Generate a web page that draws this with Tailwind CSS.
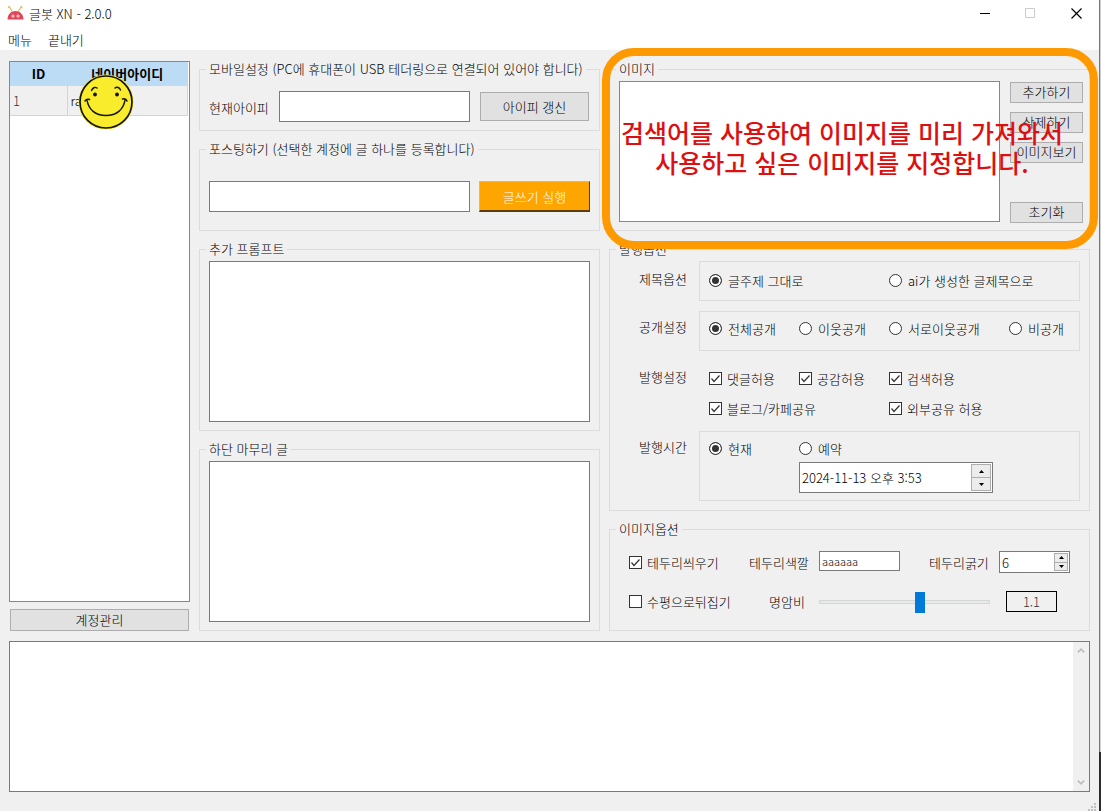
<!DOCTYPE html>
<html lang="ko">
<head>
<meta charset="utf-8">
<meta name="viewport" content="width=device-width, initial-scale=1">
<title>글봇 XN - 2.0.0</title>
<script src="https://cdn.jsdelivr.net/npm/@tailwindcss/browser@4"></script>
</head>
<body class="flex min-h-screen bg-[#f0f0f0] font-['Noto_Sans_CJK_KR',sans-serif] text-[13px] leading-[19px] font-light text-black">
<div class="flex min-w-0 flex-1 flex-col">

  <!-- Title bar and menu -->
  <header class="bg-white">
    <div class="flex h-[26px] items-center pl-[7px]">
      <svg class="mr-[5px] h-4 w-[17px]" viewBox="0 0 17 16" aria-hidden="true">
        <path d="M2.500 2 5.500 7M14 2 11 7" stroke="#e8b64c" stroke-width="1.200" fill="none"/>
        <circle cx="2" cy="2" r="1" fill="#e8b64c"/><circle cx="14.500" cy="2" r="1" fill="#e8b64c"/>
        <path d="M.5 14.500C.5 9.500 4 6 8.500 6s8 3.500 8 8.500z" fill="#e0455a"/>
        <circle cx="6" cy="11" r="1.500" fill="#fff"/><circle cx="11" cy="11" r="1.500" fill="#fff"/>
        <circle cx="6" cy="11" r=".7" fill="#a33"/><circle cx="11" cy="11" r=".7" fill="#a33"/>
      </svg>
      <h1 class="flex-1">글봇 XN - 2.0.0</h1>
      <button class="flex h-[26px] w-[46px] items-center justify-center" aria-label="최소화"><svg width="11" height="11" viewBox="0 0 11 11"><path d="M0 5.500H10" stroke="#000"/></svg></button>
      <button class="flex h-[26px] w-[45px] items-center justify-center" aria-label="최대화" disabled><svg width="11" height="11" viewBox="0 0 11 11"><path d="M.5.500h9v9h-9z" fill="none" stroke="#ccc"/></svg></button>
      <button class="flex h-[26px] w-[46px] items-center justify-center" aria-label="닫기"><svg width="11" height="11" viewBox="0 0 11 11"><path d="M.5.500l10 10M10.500.500l-10 10" stroke="#000" stroke-width="1.200"/></svg></button>
    </div>
    <nav class="flex h-6 items-center gap-4 pt-[2px] pl-2">
      <button>메뉴</button>
      <button>끝내기</button>
    </nav>
  </header>

  <main class="flex flex-1 flex-col gap-[10px] pt-[10px] pr-[9px] pl-[9px]">
    <div class="grid grid-cols-[181fr_401fr_481fr] gap-[9px]">

      <!-- Accounts -->
      <section class="flex flex-col gap-[7px] pt-px">
        <div class="relative flex-1 border border-[#828790] bg-white pr-px">
          <table class="w-full table-fixed border-collapse">
            <thead>
              <tr class="h-6 bg-[#bbdcf4]">
                <th class="w-[57px] p-0 pb-[2px] font-bold">ID</th>
                <th class="p-0 pb-[2px] font-bold">네이버아이디</th>
              </tr>
            </thead>
            <tbody>
              <tr class="h-[29px] bg-[#f0f0f0]">
                <td class="border-r border-b border-[#d4d4d4] p-0 pl-[3px] text-[#333]">1</td>
                <td class="border-r border-b border-[#d4d4d4] p-0 pl-[3px]">ra</td>
              </tr>
            </tbody>
          </table>
          <svg class="absolute top-[12px] left-[68px] h-14 w-14" viewBox="0 0 56 56" aria-hidden="true">
            <circle cx="28" cy="28" r="27.500" fill="#f7e92e"/>
            <circle cx="28" cy="28" r="26" fill="#f9ec2c" stroke="#14140a" stroke-width="1.700"/>
            <path d="M9 26c1.500 9.500 8.500 15.500 19 15.500S45.500 35.500 47 26M7 27c1-1.500 3-2 4.500-1.500M44.500 25c2-.5 4 .5 4.500 2" fill="none" stroke="#14140a" stroke-width="1.500" stroke-linecap="round"/>
            <path d="M13.500 16.500c1-2.500 3.500-4 5.500-2.500M37 14c2-1.500 4.500-.5 5.500 2" fill="none" stroke="#14140a" stroke-width="1.400" stroke-linecap="round"/>
            <circle cx="17" cy="20.500" r="1.900" fill="#14140a"/><circle cx="39" cy="20.500" r="1.900" fill="#14140a"/>
          </svg>
        </div>
        <button class="mx-px h-[22px] border border-[#adadad] bg-[#e1e1e1] pb-[2px]">계정관리</button>
      </section>

      <!-- Posting -->
      <section class="flex min-w-0 flex-col gap-[9px]">
        <fieldset class="border border-[#dcdcdc] px-[9px] pt-3 pb-2">
          <legend class="-ml-[3px] px-[3px] pb-[2px] leading-[17px]">모바일설정 (PC에 휴대폰이 USB 테더링으로 연결되어 있어야 합니다)</legend>
          <div class="flex items-center">
            <label for="ip" class="w-[70px] pt-px">현재아이피</label>
            <input id="ip" type="text" class="h-[31px] min-w-0 flex-1 border border-[#7a7a7a] bg-white px-1">
            <button class="mr-px ml-[10px] h-[29px] w-[109px] border border-[#adadad] bg-[#e1e1e1] pb-px">아이피 갱신</button>
          </div>
        </fieldset>
        <fieldset class="border border-[#dcdcdc] px-[9px] pt-[22px] pb-[18px]">
          <legend class="-ml-[3px] px-[3px] pb-[2px] leading-[17px]">포스팅하기 (선택한 계정에 글 하나를 등록합니다)</legend>
          <div class="flex items-center gap-[9px]">
            <input type="text" aria-label="글 주제" class="h-[31px] min-w-0 flex-1 border border-[#7a7a7a] bg-white px-1">
            <button class="h-[31px] w-[111px] border border-b-2 border-t-[#ffb52e] border-r-[#5c3c00] border-b-[#5c3c00] border-l-[#ffb52e] bg-[#ffa500] text-white">글쓰기 실행</button>
          </div>
        </fieldset>
        <fieldset class="border border-[#dcdcdc] px-[9px] pt-[2px] pb-2">
          <legend class="-ml-[3px] px-[3px] pb-[2px] leading-[17px]">추가 프롬프트</legend>
          <textarea aria-label="추가 프롬프트" class="block h-[161px] w-full resize-none border border-[#7a7a7a] bg-white p-1"></textarea>
        </fieldset>
        <fieldset class="border border-[#dcdcdc] px-[9px] pt-[2px] pb-2">
          <legend class="-ml-[3px] px-[3px] pb-[2px] leading-[17px]">하단 마무리 글</legend>
          <textarea aria-label="하단 마무리 글" class="block h-[161px] w-full resize-none border border-[#7a7a7a] bg-white p-1"></textarea>
        </fieldset>
      </section>

      <!-- Images and publishing -->
      <section class="flex min-w-0 flex-col gap-[9px]">
        <div class="relative">
          <fieldset class="border border-[#dcdcdc] pt-[2px] pr-[6px] pb-[7px] pl-[9px]">
            <legend class="-ml-[3px] px-[3px] pb-[2px] leading-[17px]">이미지</legend>
            <div class="flex gap-[10px]">
              <div role="listbox" aria-label="이미지" class="h-[141px] flex-1 border border-[#828790] bg-white"></div>
              <div class="flex w-[73px] flex-col gap-[9px] pt-px">
                <button class="h-[21px] border border-[#adadad] bg-[#e1e1e1] pb-px leading-[18px]">추가하기</button>
                <button class="h-[21px] border border-[#adadad] bg-[#e1e1e1] pb-px leading-[18px]">삭제하기</button>
                <button class="h-[21px] border border-[#adadad] bg-[#e1e1e1] pb-px leading-[18px]">이미지보기</button>
                <button class="mt-[30px] h-[21px] border border-[#adadad] bg-[#e1e1e1] pb-px leading-[18px]">초기화</button>
              </div>
            </div>
          </fieldset>
          <!-- Highlighted hint -->
          <div class="pointer-events-none absolute -top-3 -right-2 -bottom-[18px] -left-[7px] z-10 rounded-[32px] border-8 border-[#ff9900] pt-[61px] pr-4 text-center text-[25px] leading-[30px] font-medium whitespace-nowrap text-[#dc1010]">
            <p>검색어를 사용하여 이미지를 미리 가져와서<br>사용하고 싶은 이미지를 지정합니다.</p>
          </div>
        </div>

        <fieldset class="border border-[#dcdcdc] pt-[2px] pr-[9px] pb-[9px]">
          <legend class="ml-[6px] px-[3px] pb-[2px] leading-[17px]">발행옵션</legend>
          <div class="grid grid-cols-[89px_1fr] gap-y-[10px]">
            <span class="pt-2 pl-[29px]">제목옵션</span>
            <div role="radiogroup" aria-label="제목옵션" class="grid h-10 grid-cols-[180px_1fr] items-center border border-[#dcdcdc] pb-[2px] pl-[9px]">
              <label class="flex items-center gap-[6px]"><input type="radio" name="title" checked class="size-[13px] appearance-none rounded-full border border-[#333] bg-white checked:bg-[#333] checked:shadow-[inset_0_0_0_2px_#fff]">글주제 그대로</label>
              <label class="flex items-center gap-[6px]"><input type="radio" name="title" class="size-[13px] appearance-none rounded-full border border-[#333] bg-white checked:bg-[#333] checked:shadow-[inset_0_0_0_2px_#fff]">ai가 생성한 글제목으로</label>
            </div>
            <span class="pt-[6px] pl-[29px]">공개설정</span>
            <div role="radiogroup" aria-label="공개설정" class="grid h-10 grid-cols-[90px_90px_120px_1fr] items-center border border-[#dcdcdc] pb-[6px] pl-[9px] whitespace-nowrap">
              <label class="flex items-center gap-[6px]"><input type="radio" name="open" checked class="size-[13px] appearance-none rounded-full border border-[#333] bg-white checked:bg-[#333] checked:shadow-[inset_0_0_0_2px_#fff]">전체공개</label>
              <label class="flex items-center gap-[6px]"><input type="radio" name="open" class="size-[13px] appearance-none rounded-full border border-[#333] bg-white checked:bg-[#333] checked:shadow-[inset_0_0_0_2px_#fff]">이웃공개</label>
              <label class="flex items-center gap-[6px]"><input type="radio" name="open" class="size-[13px] appearance-none rounded-full border border-[#333] bg-white checked:bg-[#333] checked:shadow-[inset_0_0_0_2px_#fff]">서로이웃공개</label>
              <label class="flex items-center gap-[6px]"><input type="radio" name="open" class="size-[13px] appearance-none rounded-full border border-[#333] bg-white checked:bg-[#333] checked:shadow-[inset_0_0_0_2px_#fff]">비공개</label>
            </div>
            <span class="pt-[6px] pl-[29px]">발행설정</span>
            <div class="grid grid-cols-[90px_90px_1fr] gap-y-[11px] pt-2 pb-[3px] pl-[10px] whitespace-nowrap">
              <label class="flex items-center gap-[5px]"><span class="grid"><input type="checkbox" checked class="peer col-start-1 row-start-1 size-[13px] appearance-none border border-[#333] bg-white"><svg class="pointer-events-none invisible col-start-1 row-start-1 size-[13px] peer-checked:visible" viewBox="0 0 13 13"><path d="M2.500 6.500 5 9.500 10.500 3.500" fill="none" stroke="#333" stroke-width="1.200"/></svg></span>댓글허용</label>
              <label class="flex items-center gap-[5px]"><span class="grid"><input type="checkbox" checked class="peer col-start-1 row-start-1 size-[13px] appearance-none border border-[#333] bg-white"><svg class="pointer-events-none invisible col-start-1 row-start-1 size-[13px] peer-checked:visible" viewBox="0 0 13 13"><path d="M2.500 6.500 5 9.500 10.500 3.500" fill="none" stroke="#333" stroke-width="1.200"/></svg></span>공감허용</label>
              <label class="flex items-center gap-[5px]"><span class="grid"><input type="checkbox" checked class="peer col-start-1 row-start-1 size-[13px] appearance-none border border-[#333] bg-white"><svg class="pointer-events-none invisible col-start-1 row-start-1 size-[13px] peer-checked:visible" viewBox="0 0 13 13"><path d="M2.500 6.500 5 9.500 10.500 3.500" fill="none" stroke="#333" stroke-width="1.200"/></svg></span>검색허용</label>
              <label class="col-span-2 flex items-center gap-[5px]"><span class="grid"><input type="checkbox" checked class="peer col-start-1 row-start-1 size-[13px] appearance-none border border-[#333] bg-white"><svg class="pointer-events-none invisible col-start-1 row-start-1 size-[13px] peer-checked:visible" viewBox="0 0 13 13"><path d="M2.500 6.500 5 9.500 10.500 3.500" fill="none" stroke="#333" stroke-width="1.200"/></svg></span>블로그/카페공유</label>
              <label class="flex items-center gap-[5px]"><span class="grid"><input type="checkbox" checked class="peer col-start-1 row-start-1 size-[13px] appearance-none border border-[#333] bg-white"><svg class="pointer-events-none invisible col-start-1 row-start-1 size-[13px] peer-checked:visible" viewBox="0 0 13 13"><path d="M2.500 6.500 5 9.500 10.500 3.500" fill="none" stroke="#333" stroke-width="1.200"/></svg></span>외부공유 허용</label>
            </div>
            <span class="pt-[6px] pl-[29px]">발행시간</span>
            <div role="radiogroup" aria-label="발행시간" class="grid grid-cols-[90px_1fr] gap-y-1 border border-[#dcdcdc] pt-[7px] pb-[7px] pl-[9px]">
              <label class="flex items-center gap-[6px]"><input type="radio" name="time" checked class="size-[13px] appearance-none rounded-full border border-[#333] bg-white checked:bg-[#333] checked:shadow-[inset_0_0_0_2px_#fff]">현재</label>
              <label class="flex items-center gap-[6px]"><input type="radio" name="time" class="size-[13px] appearance-none rounded-full border border-[#333] bg-white checked:bg-[#333] checked:shadow-[inset_0_0_0_2px_#fff]">예약</label>
              <div class="col-start-2 flex h-[31px] w-[194px] border border-[#7a7a7a] bg-white p-px">
                <input type="text" aria-label="예약 시간" value="2024-11-13 오후 3:53" class="min-w-0 flex-1 pl-px outline-none">
                <div class="flex w-5 flex-col">
                  <button aria-label="시간 증가" class="flex flex-1 items-center justify-center border border-[#adadad] bg-[#ececec]"><svg width="5" height="3" viewBox="0 0 5 3"><path d="M0 3 2.500 0 5 3z"/></svg></button>
                  <button aria-label="시간 감소" class="flex flex-1 items-center justify-center border border-t-0 border-[#adadad] bg-[#ececec]"><svg width="5" height="3" viewBox="0 0 5 3"><path d="M0 0 2.500 3 5 0z"/></svg></button>
                </div>
              </div>
            </div>
          </div>
        </fieldset>

        <fieldset class="border border-[#dcdcdc] pt-3 pb-[18px]">
          <legend class="ml-[6px] px-[3px] pb-[2px] leading-[17px]">이미지옵션</legend>
          <div class="grid grid-cols-[120px_70px_110px_70px_1fr] gap-y-[18px] pl-[19px] whitespace-nowrap">
            <label class="flex items-center gap-[5px]"><span class="grid"><input type="checkbox" checked class="peer col-start-1 row-start-1 size-[13px] appearance-none border border-[#333] bg-white"><svg class="pointer-events-none invisible col-start-1 row-start-1 size-[13px] peer-checked:visible" viewBox="0 0 13 13"><path d="M2.500 6.500 5 9.500 10.500 3.500" fill="none" stroke="#333" stroke-width="1.200"/></svg></span>테두리씌우기</label>
            <label for="color" class="self-center">테두리색깔</label>
            <input id="color" type="text" value="aaaaaa" class="h-5 w-[81px] border border-[#7a7a7a] bg-white pl-[2px] text-[11px]">
            <label for="thick" class="self-center">테두리굵기</label>
            <div class="flex h-[22px] w-[71px] border border-[#7a7a7a] bg-white p-px">
              <input id="thick" type="text" inputmode="numeric" value="6" class="min-w-0 flex-1 pl-px outline-none">
              <div class="flex w-[14px] flex-col">
                <button aria-label="굵기 증가" class="flex flex-1 items-center justify-center border border-[#adadad] bg-[#ececec]"><svg width="5" height="3" viewBox="0 0 5 3"><path d="M0 3 2.500 0 5 3z"/></svg></button>
                <button aria-label="굵기 감소" class="flex flex-1 items-center justify-center border border-t-0 border-[#adadad] bg-[#ececec]"><svg width="5" height="3" viewBox="0 0 5 3"><path d="M0 0 2.500 3 5 0z"/></svg></button>
              </div>
            </div>
            <label class="flex items-center gap-[5px]"><span class="grid"><input type="checkbox" class="peer col-start-1 row-start-1 size-[13px] appearance-none border border-[#333] bg-white"><svg class="pointer-events-none invisible col-start-1 row-start-1 size-[13px] peer-checked:visible" viewBox="0 0 13 13"><path d="M2.500 6.500 5 9.500 10.500 3.500" fill="none" stroke="#333" stroke-width="1.200"/></svg></span>수평으로뒤집기</label>
            <label for="contrast" class="self-center pl-5">명암비</label>
            <div class="col-span-3 flex items-center gap-4">
              <input id="contrast" type="range" min="0" max="100" value="60" class="h-[21px] w-[171px] appearance-none bg-transparent [&::-webkit-slider-runnable-track]:h-1 [&::-webkit-slider-runnable-track]:border [&::-webkit-slider-runnable-track]:border-[#d6d6d6] [&::-webkit-slider-runnable-track]:bg-[#e7eaea] [&::-webkit-slider-thumb]:-mt-[9px] [&::-webkit-slider-thumb]:h-[21px] [&::-webkit-slider-thumb]:w-[10px] [&::-webkit-slider-thumb]:appearance-none [&::-webkit-slider-thumb]:bg-[#007ad9]">
              <output for="contrast" class="h-[21px] w-[51px] border border-black text-center text-[#333]">1.1</output>
            </div>
          </div>
        </fieldset>
      </section>
    </div>

    <!-- Log -->
    <div class="flex h-[151px] border border-[#7a7a7a] bg-white">
      <textarea aria-label="로그" class="flex-1 resize-none p-1 outline-none"></textarea>
      <div class="flex w-4 flex-col items-center justify-between bg-[#f0f0f0] py-[5px]" aria-hidden="true">
        <svg width="8" height="7" viewBox="0 0 9 7"><path d="M1 5.500 4.500 2 8 5.500" fill="none" stroke="#bdbdbd" stroke-width="2"/></svg>
        <svg width="8" height="7" viewBox="0 0 9 7"><path d="M1 1.500 4.500 5 8 1.500" fill="none" stroke="#bdbdbd" stroke-width="2"/></svg>
      </div>
    </div>
  </main>
  <footer class="flex justify-end pr-[3px]">
    <svg width="8" height="8" viewBox="0 0 8 8" fill="#bfbfbf" aria-hidden="true"><path d="M6 0h2v2H6zM3 3h2v2H3zM6 3h2v2H6zM0 6h2v2H0zM3 6h2v2H3zM6 6h2v2H6z"/></svg>
  </footer>
</div>
<!-- Window edge -->
<div class="flex w-[2px] flex-col">
  <div class="flex-1 border-l border-[#777] bg-[#d0d0d0]"></div>
  <div class="h-[59px] bg-[#2b2b2b]"></div>
</div>
</body>
</html>
